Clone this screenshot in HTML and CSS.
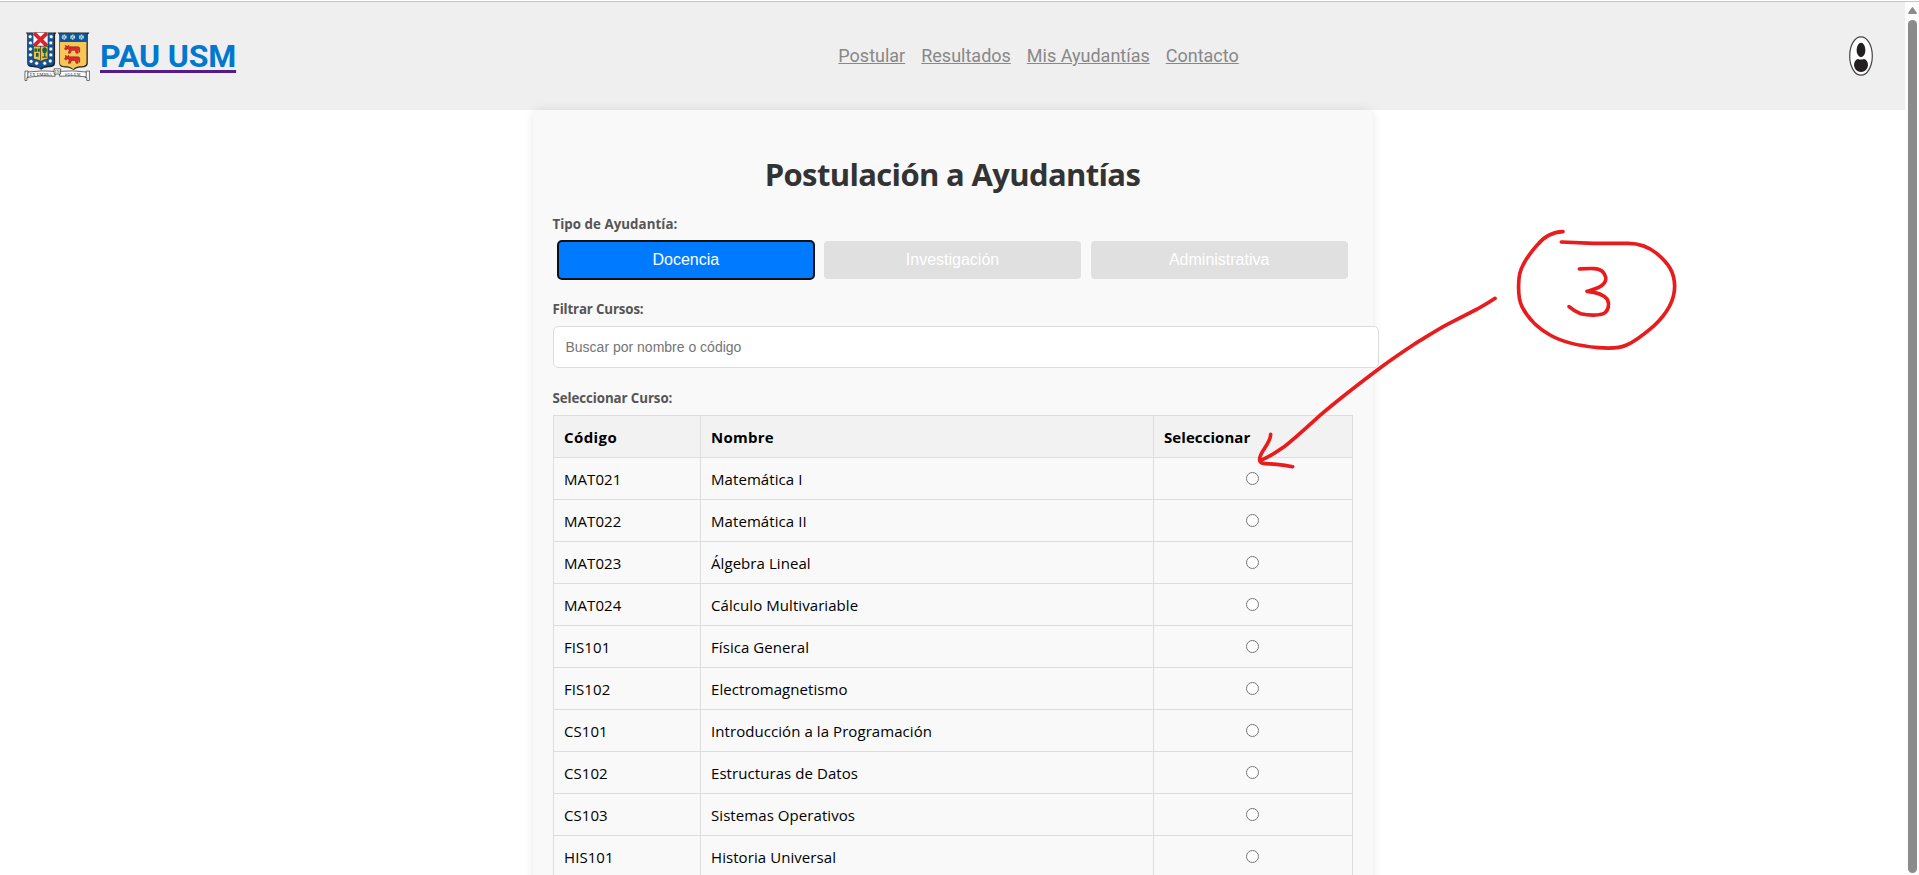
FILE: index.html
```html
<!DOCTYPE html>
<html lang="es">
<head>
<meta charset="utf-8">
<title>PAU USM</title>
<link rel="stylesheet" href="styles.css">
</head>
<body>
<div class="window">
  <div class="page">
    <header class="header">
      <a class="brand">
        <svg class="crest" viewBox="0 0 210 156">
          <path d="M6 4H100l-4 7v88c0 12-14 12-25 13-9 1-14 3-18 7-4-4-9-6-18-7-11-1-25-1-25-13V11z" fill="#222"/>
          <path d="M9 6H92v90c0 10-12 10-22 11-9 1-15 4-20 8-5-4-11-7-20-8-10-1-19-1-19-11V12z" fill="#0b559f"/>
          <path d="M29 5H73V46H29z" fill="#fff"/>
          <path d="M31 6l40 39M71 6l-40 39" stroke="#e0202b" stroke-width="12"/>
          <path d="M29 46H74V86q-12 1-22 7-10-6-23-7z" fill="#f0bd48" stroke="#222" stroke-width="2"/>
          <path d="M51 46V90" stroke="#222" stroke-width="2"/>
          <path d="M32 53h8v10h-8zM42 53h7v10h-7zM37 67h8v12h-8zM58 52q6-5 11 0 5 7 0 14-6 4-11 0-4-7 0-14zM62 66h4v14h-4zM56 78h14v4H56z" fill="#176536"/>
          <g fill="#fff" stroke="#25466f" stroke-width="2">
            <circle cx="19" cy="17" r="6"/><circle cx="20" cy="36" r="6"/><circle cx="20" cy="55" r="6"/><circle cx="20" cy="73" r="6"/><circle cx="22" cy="93" r="6"/><circle cx="39" cy="99" r="6"/>
            <circle cx="84" cy="17" r="6"/><circle cx="83" cy="36" r="6"/><circle cx="83" cy="55" r="6"/><circle cx="83" cy="73" r="6"/><circle cx="81" cy="92" r="6"/><circle cx="64" cy="99" r="6"/>
          </g>
          <path d="M104 4h98l-5 7v88c0 12-12 13-22 13-12 1-17 4-22 8-5-4-12-7-22-8-12 0-22-1-22-13V11z" fill="#222"/>
          <path d="M107 6h88v27h-84V12z" fill="#0b559f"/>
          <path d="M111 33h82v64c0 10-11 11-20 11-10 1-16 4-21 9-5-5-12-8-21-9-10 0-20-1-20-11z" fill="#f8c557"/>
          <g fill="#8a9a7a" stroke="#b9dcf0" stroke-width="5" stroke-dasharray="4 1.500">
            <circle cx="124" cy="18" r="5.500"/><circle cx="150" cy="18" r="5.500"/><circle cx="177" cy="18" r="5.500"/>
          </g>
          <g fill="#e3242b" stroke="#6a1c16" stroke-width="1.500">
            <path id="bull" d="M127 44l7 2 5-2-1 4h30l4 3v14h-3v-10l-4 4 2 9h-6l-3-9h-11l-4 9h-6l3-11-7-3-3 4-5-3 4-7z"/>
            <use href="#bull" y="31"/>
          </g>
          <g fill="#fff" stroke="#222" stroke-width="2">
            <path d="M3 123h10v20h-4v9H3zM192 123h10v29h-8v-9h-5z"/>
            <path d="M12 126q45-6 84-2v15q-42-4-84 3zM110 124q42-4 82 2v15q-40-6-82-2z"/>
            <path d="M93 116h20v16H93z"/>
          </g>
          <text class="motto" x="18" y="138" textLength="68">EX UMBRA</text>
          <text class="motto" x="96" y="129" textLength="14">IN</text>
          <text class="motto" x="126" y="138" textLength="48">SOLEM</text>
        </svg>
        <span class="brand-name">PAU USM</span>
      </a>
      <nav class="nav">
        <a>Postular</a><a>Resultados</a><a>Mis Ayudantías</a><a>Contacto</a>
      </nav>
      <svg class="user" viewBox="0 0 40 40">
        <ellipse cx="20" cy="20" rx="11.300" ry="19.200" fill="#fff" stroke="#444" stroke-width="1.200"/>
        <ellipse cx="20" cy="14" rx="4.400" ry="7.200" fill="#231f20"/>
        <path d="M13 29.500q0-5.500 4-6.500 3 1 6 0 4 1 4 6.500-1 6.500-7 6.500t-7-6.500z" fill="#231f20"/>
      </svg>
    </header>
    <main class="card">
      <h1 class="title">Postulación a Ayudantías</h1>
      <div class="label label-type">Tipo de Ayudantía:</div>
      <div class="types">
        <button class="type active">Docencia</button>
        <button class="type">Investigación</button>
        <button class="type">Administrativa</button>
      </div>
      <div class="label label-filter">Filtrar Cursos:</div>
      <input class="search" type="text" placeholder="Buscar por nombre o código">
      <div class="label label-course">Seleccionar Curso:</div>
      <table class="courses">
        <thead><tr><th class="c-code">Código</th><th class="c-name">Nombre</th><th>Seleccionar</th></tr></thead>
        <tbody>
          <tr><td>MAT021</td><td>Matemática I</td><td class="pick"><input type="radio" name="c"></td></tr>
          <tr><td>MAT022</td><td>Matemática II</td><td class="pick"><input type="radio" name="c"></td></tr>
          <tr><td>MAT023</td><td>Álgebra Lineal</td><td class="pick"><input type="radio" name="c"></td></tr>
          <tr><td>MAT024</td><td>Cálculo Multivariable</td><td class="pick"><input type="radio" name="c"></td></tr>
          <tr><td>FIS101</td><td>Física General</td><td class="pick"><input type="radio" name="c"></td></tr>
          <tr><td>FIS102</td><td>Electromagnetismo</td><td class="pick"><input type="radio" name="c"></td></tr>
          <tr><td>CS101</td><td>Introducción a la Programación</td><td class="pick"><input type="radio" name="c"></td></tr>
          <tr><td>CS102</td><td>Estructuras de Datos</td><td class="pick"><input type="radio" name="c"></td></tr>
          <tr><td>CS103</td><td>Sistemas Operativos</td><td class="pick"><input type="radio" name="c"></td></tr>
          <tr><td>HIS101</td><td>Historia Universal</td><td class="pick"><input type="radio" name="c"></td></tr>
        </tbody>
      </table>
    </main>
  </div>
  <div class="scrollbar">
    <svg class="arrow" viewBox="0 0 9 7"><path d="M4.500 .8L8.200 6.200H.8z" fill="#8b8b8b" stroke="#8b8b8b" stroke-width="1.400" stroke-linejoin="round"/></svg>
    <div class="thumb"></div>
  </div>
</div>
<svg class="ink" viewBox="0 0 1380 810">
  <path d="M765 265Q745 279 712 297L622 343C590 360 555 383 525 401C490 424 455 448 425 470C375 508 310 556 240 616C200 652 165 685 130 712Q90 740 62 751"/>
  <path d="M92 673C93 700 55 730 59 750C61 765 80 760 110 763Q135 765 158 770"/>
  <path d="M969 65C935 66 912 80 891 106C865 135 840 168 837 205C834 240 835 268 846 290C862 322 892 354 930 375C970 398 1020 408 1075 413C1110 416 1137 416 1160 405C1190 392 1215 370 1240 349C1275 317 1304 274 1304 228C1303 185 1285 160 1250 130C1225 110 1200 100 1165 100H1060L964 96"/>
  <path d="M1018 177C1050 175 1075 173 1087 184C1098 195 1101 209 1092 220C1082 234 1058 239 1041 244C1065 246 1091 254 1102 268C1110 284 1104 302 1094 309C1080 317 1047 317 1022 311Q1003 304 987 290"/>
</svg>
</body>
</html>
```
FILE: styles.css
```css
body {
  margin: 0;
  height: 875px;
  overflow: hidden;
  background: #fff;
  font-family: "Open Sans", "Noto Sans", sans-serif;
}
.window {
  display: flex;
  height: 873px;
  margin-top: 1px;
  border-top: 1px solid #c3c7c4;
}
.page { flex: 1; height: 873px; overflow: hidden; }
.header {
  display: flex;
  justify-content: space-between;
  align-items: center;
  box-sizing: border-box;
  height: 108px;
  padding: 0 24px;
  background: #efefef;
  font-family: Roboto, sans-serif;
}
.brand { display: flex; align-items: center; gap: 8px; }
.crest { width: 68px; height: 51px; }
.motto { font: 12px "Liberation Serif", serif; fill: #222; }
.brand-name {
  font-size: 32px;
  font-weight: 700;
  line-height: 38px;
  letter-spacing: -.15px;
  color: #0078d0;
  text-decoration: underline #551a8b;
  text-decoration-thickness: 3px;
  text-underline-offset: 3px;
}
.nav { display: flex; gap: 16px; }
.nav a { font-size: 18px; line-height: 22px; color: #888; text-decoration: underline; }
.user { width: 40px; height: 40px; }
.card {
  box-sizing: border-box;
  width: 840px;
  height: 800px;
  margin: 0 auto;
  padding: 42px 20px 0;
  border-radius: 8px;
  background: #f9f9f9;
  box-shadow: 0 0 10px rgba(0, 0, 0, .1);
}
.title {
  margin: 0;
  font-size: 31px;
  line-height: 44px;
  font-weight: 700;
  letter-spacing: -.65px;
  text-align: center;
  color: #333;
}
.label { font-size: 13.3px; line-height: 20px; font-weight: 700; color: #555; }
.label-type { margin-top: 18px; letter-spacing: .05px; }
.types { display: flex; gap: 10px; padding: 7px 5px 0; }
.type {
  flex: 1;
  height: 38px;
  border: 0;
  border-radius: 4px;
  padding: 0;
  background: #e0e0e0;
  color: #fff;
  font: 16px "Liberation Sans", Arial, sans-serif;
}
.type.active { background: #007bff; outline: 2px solid #101010; outline-offset: -1px; }
.label-filter { margin-top: 20px; letter-spacing: -.15px; }
.search {
  display: block;
  box-sizing: border-box;
  width: 826px;
  height: 42px;
  margin-top: 7px;
  padding: 0 12px;
  border: 1px solid #ddd;
  border-radius: 5px;
  font: 14px "Liberation Sans", Arial, sans-serif;
}
.label-course { margin-top: 20px; letter-spacing: -.08px; }
.courses {
  width: 800px;
  margin-top: 7px;
  border-collapse: collapse;
  table-layout: fixed;
  font-size: 15px;
  line-height: 21px;
  letter-spacing: .07px;
}
.courses th, .courses td { box-sizing: border-box; height: 42px; padding: 2px 10px 0 10.5px; border: 1px solid #ddd; text-align: left; }
.courses th { background: #f2f2f2; }
.courses .c-code { width: 147px; letter-spacing: .4px; }
.courses .c-name { width: 453px; letter-spacing: .25px; }
.courses .pick { padding: 0; text-align: center; }
.pick input { display: block; width: 13px; height: 13px; margin: 0 auto; }
.scrollbar { width: 14px; background: #fcfcfc; }
.arrow { display: block; width: 9px; height: 7px; margin: 5px 0 6px 3px; }
.thumb { width: 9px; height: 853px; margin-left: 3px; border-radius: 5px; background: #8b8b8b; }
.ink {
  position: absolute;
  left: 1240px;
  top: 210px;
  width: 460px;
  height: 270px;
  fill: none;
  stroke: #e81c1c;
  stroke-width: 11px;
  stroke-linecap: round;
  stroke-linejoin: round;
}
```
